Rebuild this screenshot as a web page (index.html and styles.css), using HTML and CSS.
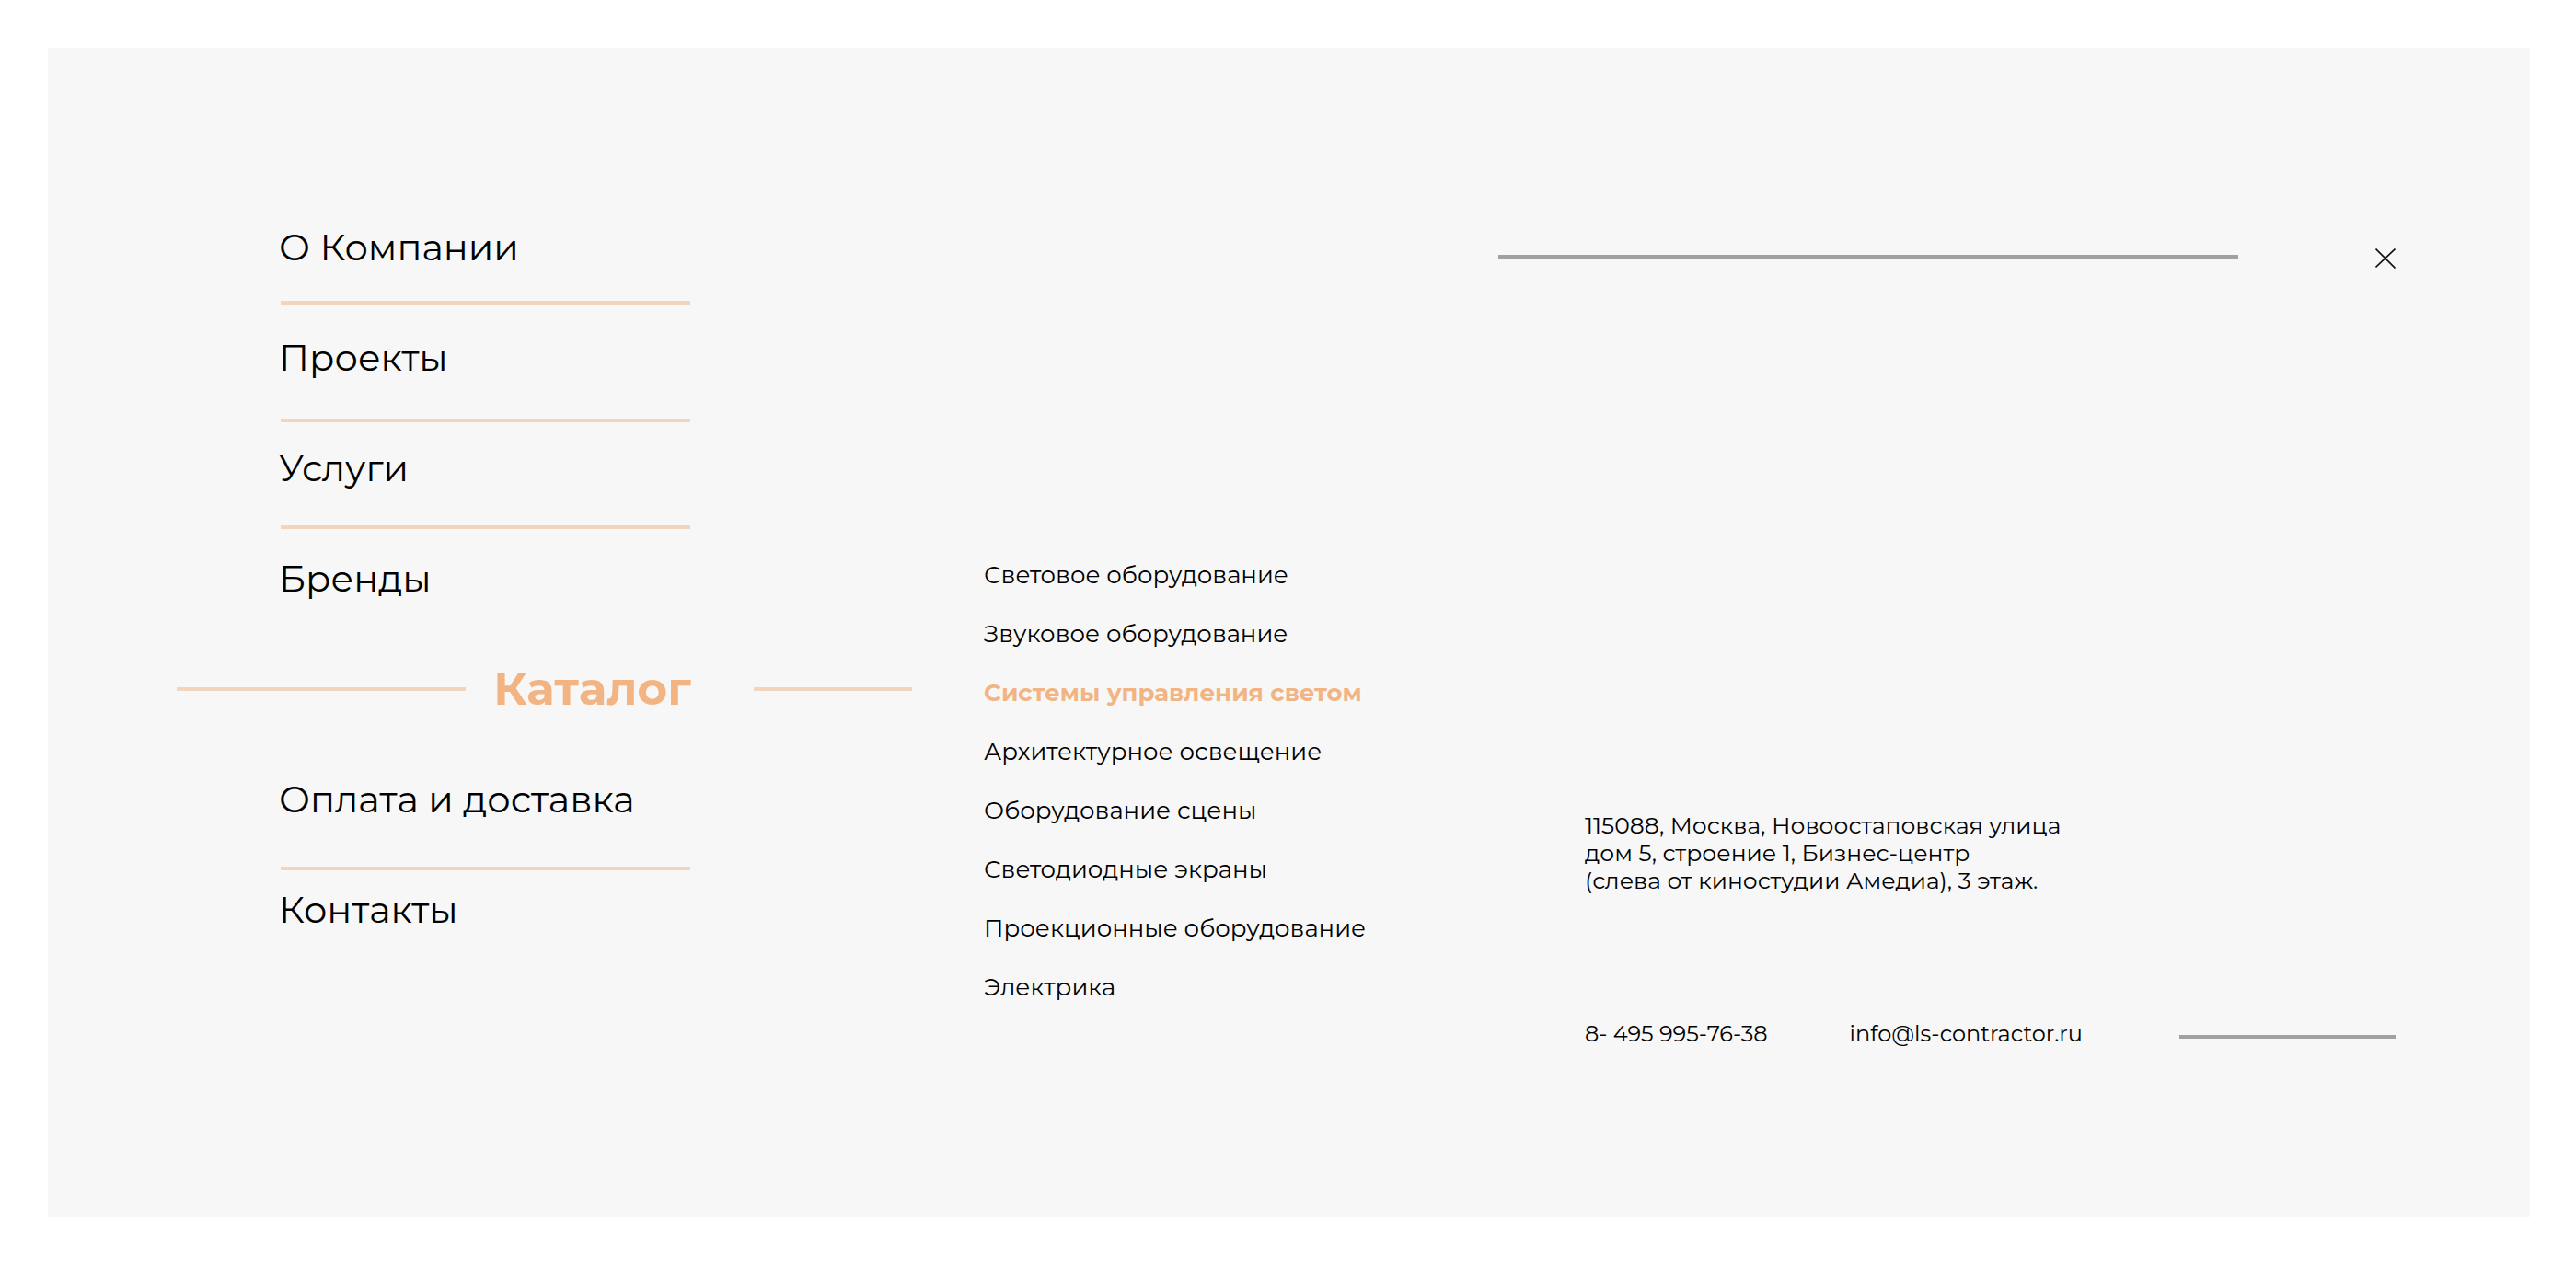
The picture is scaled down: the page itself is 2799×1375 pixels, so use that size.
FILE: index.html
```
<!DOCTYPE html>
<html lang="ru">
<head>
  <meta charset="utf-8">
  <meta name="viewport" content="width=device-width, initial-scale=1">
  <title>Каталог</title>
  <link rel="stylesheet" href="styles.css">
</head>
<body>
  <main class="panel">
    <nav class="menu" aria-label="Главное меню">
      <ul class="menu-list">
        <li class="menu-item menu-item--tight"><a href="#about">О Компании</a></li>
        <li class="menu-item menu-item--loose"><a href="#projects">Проекты</a></li>
        <li class="menu-item menu-item--medium"><a href="#services">Услуги</a></li>
        <li class="menu-item"><a href="#brands">Бренды</a></li>
        <li class="menu-item menu-item--active"><a href="#catalog" aria-current="page">Каталог</a></li>
        <li class="menu-item menu-item--wide"><a href="#delivery">Оплата и доставка</a></li>
        <li class="menu-item"><a href="#contacts">Контакты</a></li>
      </ul>
    </nav>

    <nav class="submenu" aria-label="Каталог">
      <ul class="submenu-list">
        <li><a href="#light">Световое оборудование</a></li>
        <li><a href="#sound">Звуковое оборудование</a></li>
        <li><a class="current" href="#control" aria-current="true">Системы управления светом</a></li>
        <li><a href="#architecture">Архитектурное освещение</a></li>
        <li><a href="#stage">Оборудование сцены</a></li>
        <li><a href="#led">Светодиодные экраны</a></li>
        <li><a href="#projection">Проекционные оборудование</a></li>
        <li><a href="#electric">Электрика</a></li>
      </ul>
    </nav>

    <section class="aside">
      <div class="topbar">
        <span class="topbar-rule"></span>
        <button class="close" type="button" aria-label="Закрыть">
          <svg viewBox="0 0 22 22" width="22" height="22" aria-hidden="true">
            <path d="M0.500 0.500 21.500 21.500M21.500 0.500 0.500 20.500" fill="none" stroke="#111" stroke-width="1.600"/>
          </svg>
        </button>
      </div>
      <address class="address">
        115088, Москва, Новоостаповская улица<br>
        дом 5, строение 1, Бизнес-центр<br>
        (слева от киностудии Амедиа), 3 этаж.
      </address>
      <div class="contacts">
        <a href="tel:84959957638">8- 495 995-76-38</a>
        <a href="mailto:info@ls-contractor.ru">info@ls-contractor.ru</a>
        <span class="contacts-rule"></span>
      </div>
    </section>
  </main>
</body>
</html>
```
FILE: styles.css
```
:root {
  --ink: #000;
  --accent: #f2b483;
  --accent-soft: #f3d5bd;
  --grey: #a1a1a1;
}

* {
  box-sizing: border-box;
}

body {
  margin: 0;
  background: #fff;
  color: var(--ink);
  font-family: "Montserrat", "Open Sans", sans-serif;
}

a {
  color: inherit;
  text-decoration: none;
}

ul {
  margin: 0;
  padding: 0;
  list-style: none;
}

.panel {
  display: grid;
  grid-template-columns: 799fr 481fr 975fr;
  align-items: start;
  column-gap: 78px;
  min-height: calc(100vh - 104px);
  margin: 52px 50px 52px 52px;
  padding: 193px 146px 100px 140px;
  background: #f7f7f7;
}

/* Main menu */
.menu-item {
  height: 120px;
  margin: 0 241px 0 111px;
  font-size: 40px;
  line-height: 48px;
}

.menu-item a {
  display: block;
}

.menu-item::after {
  display: block;
  height: 4px;
  margin-left: 2px;
  background: var(--accent-soft);
}

.menu-item--tight::after {
  content: "";
  margin-top: 34px;
}

.menu-item--medium::after {
  content: "";
  margin-top: 38px;
}

.menu-item--loose::after {
  content: "";
  margin-top: 42px;
}

.menu-item--wide::after {
  content: "";
  margin-top: 49px;
}

.menu-item--active {
  display: flex;
  align-items: center;
  margin: 0;
  padding-bottom: 72px;
  color: var(--accent);
  font-size: 50px;
  font-weight: 700;
}

.menu-item--active::before,
.menu-item--active::after {
  content: "";
  height: 4px;
  background: var(--accent-soft);
}

.menu-item--active::before {
  flex: 1;
  margin-right: 30px;
}

.menu-item--active::after {
  width: 172px;
  margin-left: 68px;
}

/* Catalogue sections */
.submenu {
  padding-top: 348px;
  font-size: 26px;
  line-height: 64px;
  white-space: nowrap;
}

.submenu .current {
  color: var(--accent);
  font-weight: 700;
}

/* Close bar, address and contacts */
.topbar {
  display: flex;
  align-items: flex-start;
  padding-top: 25px;
}

.topbar-rule {
  flex: 1;
  height: 4px;
  margin: 7px 149px 0 0;
  background: var(--grey);
}

.close {
  display: flex;
  padding: 0;
  border: 0;
  background: none;
  cursor: pointer;
}

.address {
  margin-top: 590px;
  padding-left: 94px;
  font-size: 25px;
  font-style: normal;
  line-height: 30px;
}

.contacts {
  display: flex;
  align-items: center;
  margin-top: 134px;
  padding-left: 94px;
  font-size: 24px;
  line-height: 36px;
  white-space: nowrap;
}

.contacts a + a {
  margin-left: 89px;
}

.contacts-rule {
  flex: 1;
  height: 4px;
  margin: 6px 0 0 105px;
  background: var(--grey);
}

@media (max-width: 1900px) {
  .panel {
    display: flex;
    flex-direction: column;
    align-items: stretch;
    padding: 60px;
  }

  .submenu {
    padding-top: 40px;
  }

  .address {
    margin-top: 60px;
  }
}
```
